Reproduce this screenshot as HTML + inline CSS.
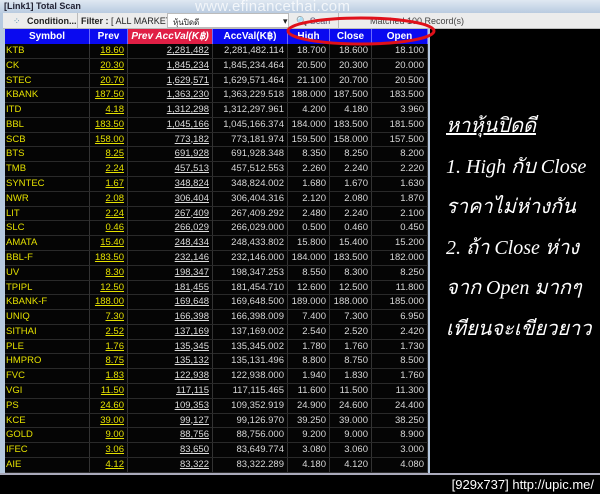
<!DOCTYPE html>
<html><head><meta charset="utf-8"><style>
*{margin:0;padding:0;box-sizing:border-box}
body{width:600px;height:494px;background:#000;position:relative;overflow:hidden;font-family:"Liberation Sans",Tahoma,sans-serif}
#frame{position:absolute;left:0;top:0;width:430px;height:475px;background:#b6c9df;}
#title{position:absolute;left:0;top:0;width:600px;height:13px;background:linear-gradient(#dfe8f2,#b9cbe0);font-size:9px;font-weight:bold;color:#223;padding:1px 0 0 4px}
#wm{position:absolute;left:195px;top:-2px;font-size:15px;color:rgba(255,255,255,.75);letter-spacing:.3px}
#tool{position:absolute;left:3px;top:13px;width:597px;height:16px;background:#ececec;border-bottom:1px solid #bbb;font-size:9px;color:#222}
#tool span{position:absolute;top:3px;white-space:nowrap}
#hdr{position:absolute;left:5px;top:29px;height:15px;width:423px;background:#0a0af0;}
#hdr div{position:absolute;top:0;height:15px;color:#fff;font-weight:bold;font-size:10px;text-align:center;line-height:15px;border-right:1px solid #6a6aff}
#rows{position:absolute;left:5px;top:44px;width:423px;height:429px;background:#050505}
.r{position:relative;height:14.79px;border-bottom:1px solid #2a2a2a;font-size:9.5px;line-height:14px;color:#d8d8d8}
.r div{position:absolute;top:0;height:14px;text-align:right;padding-right:3px;border-right:1px solid #333}
.s{left:0;width:85px;text-align:left!important;padding-left:1px;color:#e4e000}
.p{left:85px;width:38px;color:#e4e000;text-decoration:underline}
.a{left:123px;width:85px;text-decoration:underline;color:#ddd}
.b{left:208px;width:75px}
.h{left:283px;width:42px}
.c{left:325px;width:42px}
.o{left:367px;width:56px}
#txt{position:absolute;left:446px;top:106px;color:#fff;font-family:"Liberation Serif",serif;font-style:italic;font-size:20px;line-height:40.5px;white-space:nowrap}
#bl{position:absolute;left:0;top:473px;width:600px;height:2px;background:#aab}
#cap{position:absolute;right:6px;top:477px;color:#fff;font-size:13px;font-family:"Liberation Sans Narrow","Liberation Sans",sans-serif}
</style></head><body>
<div id="frame"></div>
<div id="title">[Link1] Total Scan</div>
<div id="wm">www.efinancethai.com</div>
<div id="tool">
<span style="left:10px;color:#58a">⁘</span>
<span style="left:24px;font-weight:bold">Condition...</span>
<span style="left:74px;top:0;height:16px;border-left:1px solid #bbb"></span>
<span style="left:78px"><b>Filter :</b> [ ALL MARKET ]</span>
<span style="left:164px;top:0;width:122px;height:15px;background:#fff;border:1px solid #bbb"></span>
<span style="left:170px;font-size:8px">หุ้นปิดดี</span>
<span style="left:280px">▾</span>
<span style="left:293px;color:#557">🔍 Scan</span>
<span style="left:335px;top:0;height:16px;border-left:1px solid #bbb"></span>
<span style="left:367px;color:#444">Matched 100 Record(s)</span>
</div>
<div id="hdr">
<div style="left:0;width:85px">Symbol</div>
<div style="left:85px;width:38px">Prev</div>
<div style="left:123px;width:85px;background:#e01f45;font-style:italic">Prev AccVal(K฿)</div>
<div style="left:208px;width:75px">AccVal(K฿)</div>
<div style="left:283px;width:42px">High</div>
<div style="left:325px;width:42px">Close</div>
<div style="left:367px;width:56px">Open</div>
</div>
<div id="rows">
<div class="r"><div class="s">KTB</div><div class="p">18.60</div><div class="a">2,281,482</div><div class="b">2,281,482.114</div><div class="h">18.700</div><div class="c">18.600</div><div class="o">18.100</div></div>
<div class="r"><div class="s">CK</div><div class="p">20.30</div><div class="a">1,845,234</div><div class="b">1,845,234.464</div><div class="h">20.500</div><div class="c">20.300</div><div class="o">20.000</div></div>
<div class="r"><div class="s">STEC</div><div class="p">20.70</div><div class="a">1,629,571</div><div class="b">1,629,571.464</div><div class="h">21.100</div><div class="c">20.700</div><div class="o">20.500</div></div>
<div class="r"><div class="s">KBANK</div><div class="p">187.50</div><div class="a">1,363,230</div><div class="b">1,363,229.518</div><div class="h">188.000</div><div class="c">187.500</div><div class="o">183.500</div></div>
<div class="r"><div class="s">ITD</div><div class="p">4.18</div><div class="a">1,312,298</div><div class="b">1,312,297.961</div><div class="h">4.200</div><div class="c">4.180</div><div class="o">3.960</div></div>
<div class="r"><div class="s">BBL</div><div class="p">183.50</div><div class="a">1,045,166</div><div class="b">1,045,166.374</div><div class="h">184.000</div><div class="c">183.500</div><div class="o">181.500</div></div>
<div class="r"><div class="s">SCB</div><div class="p">158.00</div><div class="a">773,182</div><div class="b">773,181.974</div><div class="h">159.500</div><div class="c">158.000</div><div class="o">157.500</div></div>
<div class="r"><div class="s">BTS</div><div class="p">8.25</div><div class="a">691,928</div><div class="b">691,928.348</div><div class="h">8.350</div><div class="c">8.250</div><div class="o">8.200</div></div>
<div class="r"><div class="s">TMB</div><div class="p">2.24</div><div class="a">457,513</div><div class="b">457,512.553</div><div class="h">2.260</div><div class="c">2.240</div><div class="o">2.220</div></div>
<div class="r"><div class="s">SYNTEC</div><div class="p">1.67</div><div class="a">348,824</div><div class="b">348,824.002</div><div class="h">1.680</div><div class="c">1.670</div><div class="o">1.630</div></div>
<div class="r"><div class="s">NWR</div><div class="p">2.08</div><div class="a">306,404</div><div class="b">306,404.316</div><div class="h">2.120</div><div class="c">2.080</div><div class="o">1.870</div></div>
<div class="r"><div class="s">LIT</div><div class="p">2.24</div><div class="a">267,409</div><div class="b">267,409.292</div><div class="h">2.480</div><div class="c">2.240</div><div class="o">2.100</div></div>
<div class="r"><div class="s">SLC</div><div class="p">0.46</div><div class="a">266,029</div><div class="b">266,029.000</div><div class="h">0.500</div><div class="c">0.460</div><div class="o">0.450</div></div>
<div class="r"><div class="s">AMATA</div><div class="p">15.40</div><div class="a">248,434</div><div class="b">248,433.802</div><div class="h">15.800</div><div class="c">15.400</div><div class="o">15.200</div></div>
<div class="r"><div class="s">BBL-F</div><div class="p">183.50</div><div class="a">232,146</div><div class="b">232,146.000</div><div class="h">184.000</div><div class="c">183.500</div><div class="o">182.000</div></div>
<div class="r"><div class="s">UV</div><div class="p">8.30</div><div class="a">198,347</div><div class="b">198,347.253</div><div class="h">8.550</div><div class="c">8.300</div><div class="o">8.250</div></div>
<div class="r"><div class="s">TPIPL</div><div class="p">12.50</div><div class="a">181,455</div><div class="b">181,454.710</div><div class="h">12.600</div><div class="c">12.500</div><div class="o">11.800</div></div>
<div class="r"><div class="s">KBANK-F</div><div class="p">188.00</div><div class="a">169,648</div><div class="b">169,648.500</div><div class="h">189.000</div><div class="c">188.000</div><div class="o">185.000</div></div>
<div class="r"><div class="s">UNIQ</div><div class="p">7.30</div><div class="a">166,398</div><div class="b">166,398.009</div><div class="h">7.400</div><div class="c">7.300</div><div class="o">6.950</div></div>
<div class="r"><div class="s">SITHAI</div><div class="p">2.52</div><div class="a">137,169</div><div class="b">137,169.002</div><div class="h">2.540</div><div class="c">2.520</div><div class="o">2.420</div></div>
<div class="r"><div class="s">PLE</div><div class="p">1.76</div><div class="a">135,345</div><div class="b">135,345.002</div><div class="h">1.780</div><div class="c">1.760</div><div class="o">1.730</div></div>
<div class="r"><div class="s">HMPRO</div><div class="p">8.75</div><div class="a">135,132</div><div class="b">135,131.496</div><div class="h">8.800</div><div class="c">8.750</div><div class="o">8.500</div></div>
<div class="r"><div class="s">FVC</div><div class="p">1.83</div><div class="a">122,938</div><div class="b">122,938.000</div><div class="h">1.940</div><div class="c">1.830</div><div class="o">1.760</div></div>
<div class="r"><div class="s">VGI</div><div class="p">11.50</div><div class="a">117,115</div><div class="b">117,115.465</div><div class="h">11.600</div><div class="c">11.500</div><div class="o">11.300</div></div>
<div class="r"><div class="s">PS</div><div class="p">24.60</div><div class="a">109,353</div><div class="b">109,352.919</div><div class="h">24.900</div><div class="c">24.600</div><div class="o">24.400</div></div>
<div class="r"><div class="s">KCE</div><div class="p">39.00</div><div class="a">99,127</div><div class="b">99,126.970</div><div class="h">39.250</div><div class="c">39.000</div><div class="o">38.250</div></div>
<div class="r"><div class="s">GOLD</div><div class="p">9.00</div><div class="a">88,756</div><div class="b">88,756.000</div><div class="h">9.200</div><div class="c">9.000</div><div class="o">8.900</div></div>
<div class="r"><div class="s">IFEC</div><div class="p">3.06</div><div class="a">83,650</div><div class="b">83,649.774</div><div class="h">3.080</div><div class="c">3.060</div><div class="o">3.000</div></div>
<div class="r"><div class="s">AIE</div><div class="p">4.12</div><div class="a">83,322</div><div class="b">83,322.289</div><div class="h">4.180</div><div class="c">4.120</div><div class="o">4.080</div></div>
</div>
<svg style="position:absolute;left:0;top:0" width="600" height="60"><ellipse cx="361" cy="31" rx="73" ry="13" fill="none" stroke="#e0101a" stroke-width="3"/></svg>
<div id="txt"><u>หาหุ้นปิดดี</u><br>1. High กับ Close<br>ราคาไม่ห่างกัน<br>2. ถ้า Close ห่าง<br>จาก Open มากๆ<br>เทียนจะเขียวยาว</div>
<div id="bl"></div>
<div id="cap">[929x737] http://upic.me/</div>
</body></html>
